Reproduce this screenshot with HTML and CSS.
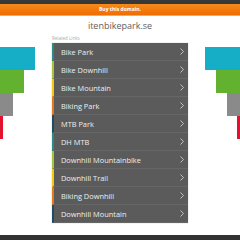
FILE: index.html
```html
<!DOCTYPE html>
<html lang="en">
<head>
    <meta charset="UTF-8">
    <meta name="viewport" content="width=device-width, initial-scale=1.0">
    <title>itenbikepark.se</title>
    <link rel="stylesheet" href="styles.css">
</head>
<body>

<div class="topbar"></div>
<div class="buybar">Buy this domain.</div>
<h1 class="domain">itenbikepark.se</h1>

<div class="main">
    <div class="decor decor-left">
        <span class="bar cyan w35"></span>
        <span class="bar green w24"></span>
        <span class="bar gray w13"></span>
        <span class="bar red w3"></span>
    </div>

    <div class="links">
        <p class="label">Related Links</p>
        <ul class="list">
            <li class="c-teal"><a href="#">Bike Park</a><svg viewBox="0 0 4 7"><polyline points="0.5,0.5 3.5,3.5 0.5,6.5"/></svg></li>
            <li class="c-lime"><a href="#">Bike Downhill</a><svg viewBox="0 0 4 7"><polyline points="0.5,0.5 3.5,3.5 0.5,6.5"/></svg></li>
            <li class="c-yellow"><a href="#">Bike Mountain</a><svg viewBox="0 0 4 7"><polyline points="0.5,0.5 3.5,3.5 0.5,6.5"/></svg></li>
            <li class="c-orange"><a href="#">Biking Park</a><svg viewBox="0 0 4 7"><polyline points="0.5,0.5 3.5,3.5 0.5,6.5"/></svg></li>
            <li class="c-navy"><a href="#">MTB Park</a><svg viewBox="0 0 4 7"><polyline points="0.5,0.5 3.5,3.5 0.5,6.5"/></svg></li>
            <li class="c-teal"><a href="#">DH MTB</a><svg viewBox="0 0 4 7"><polyline points="0.5,0.5 3.5,3.5 0.5,6.5"/></svg></li>
            <li class="c-lime"><a href="#">Downhill Mountainbike</a><svg viewBox="0 0 4 7"><polyline points="0.5,0.5 3.5,3.5 0.5,6.5"/></svg></li>
            <li class="c-yellow"><a href="#">Downhill Trail</a><svg viewBox="0 0 4 7"><polyline points="0.5,0.5 3.5,3.5 0.5,6.5"/></svg></li>
            <li class="c-orange"><a href="#">Biking Downhill</a><svg viewBox="0 0 4 7"><polyline points="0.5,0.5 3.5,3.5 0.5,6.5"/></svg></li>
            <li class="c-navy"><a href="#">Downhill Mountain</a><svg viewBox="0 0 4 7"><polyline points="0.5,0.5 3.5,3.5 0.5,6.5"/></svg></li>
        </ul>
    </div>

    <div class="decor decor-right">
        <span class="bar cyan w35"></span>
        <span class="bar green w24"></span>
        <span class="bar gray w13"></span>
        <span class="bar red w3"></span>
    </div>
</div>

<div class="bottombar"></div>

</body>
</html>
```

FILE: styles.css
```css
body {
    margin: 0;
    font-family: "Open Sans", "Liberation Sans", sans-serif;
    background: #fff;
    height: 240px;
    overflow: hidden;
    position: relative;
}

.topbar {
    height: 4px;
    background-color: #383838;
}

.buybar {
    height: 11px;
    line-height: 11px;
    background: linear-gradient(#f58a1a, #f06d00);
    border-bottom: 1px solid #f9a85a;
    color: #fff;
    font-size: 5px;
    font-weight: bold;
    text-align: center;
}

.domain {
    margin: 4px 0 0;
    height: 12px;
    line-height: 12px;
    font-size: 9px;
    font-weight: normal;
    color: #5e5e5e;
    text-align: center;
}

.main {
    display: flex;
}

.decor {
    width: 52px;
    padding-top: 15px;
    display: flex;
    flex-direction: column;
}

.decor-left {
    align-items: flex-start;
}

.decor-right {
    align-items: flex-end;
}

.bar {
    display: block;
    height: 23px;
}

.cyan { background-color: #16aec6; }
.green { background-color: #62b22f; }
.gray { background-color: #8a8a8a; }
.red { background-color: #e2112f; }

.w35 { width: 35px; }
.w24 { width: 24px; }
.w13 { width: 13px; }
.w3 { width: 3px; }

.links {
    width: 136px;
}

.label {
    margin: 0 0 1px;
    padding-top: 2px;
    height: 8px;
    line-height: 8px;
    font-size: 4.5px;
    color: #aaa;
}

.list {
    margin: 0;
    padding: 0;
    list-style: none;
    background-color: #5b5b5b;
    box-shadow: 0 0 1px rgba(0, 0, 0, 0.3);
}

.list li {
    height: 17px;
    border-bottom: 1px solid #666;
    border-left: 2px solid #888;
    display: flex;
    align-items: center;
    justify-content: space-between;
    padding: 0 4px 0 7px;
}

.list li a {
    color: #eee;
    text-decoration: none;
    font-size: 7.4px;
}

.list li svg {
    width: 4px;
    height: 7px;
    fill: none;
    stroke: #ccc;
    stroke-width: 0.9;
}

.list .c-teal { border-left-color: #2a8a84; }
.list .c-lime { border-left-color: #a9c43b; }
.list .c-yellow { border-left-color: #f3c80f; }
.list .c-orange { border-left-color: #e5791f; }
.list .c-navy { border-left-color: #1d4e66; }

.bottombar {
    position: absolute;
    left: 0;
    right: 0;
    bottom: 0;
    height: 5px;
    background-color: #333;
}
```
